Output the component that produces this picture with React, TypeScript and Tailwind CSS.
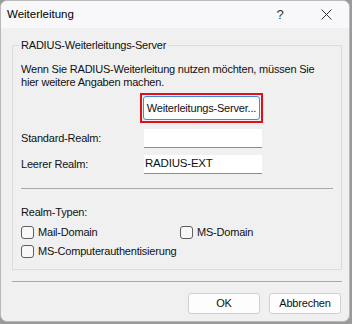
import React from "react";

function Checkbox({ label }: { label: string }) {
  return (
    <label className="flex items-center gap-[4px] whitespace-nowrap leading-[14px]">
      <span className="h-[13px] w-[13px] shrink-0 rounded-[3px] border border-[#5f5f5f] bg-[#f8f8f8]" />
      <span>{label}</span>
    </label>
  );
}

export default function App() {
  return (
    <div className="h-[324px] w-[352px] bg-[#9a9a9a] font-['Liberation_Sans',Arial,sans-serif] text-[11px] tracking-[-0.2px] text-[#111]">
      <div className="flex h-[322px] w-[350px] flex-col overflow-hidden rounded-[7px] border border-[#b9b9b9] bg-[#f0f0f0]">
        {/* title bar */}
        <div className="flex h-[27px] items-center bg-[#f8f8fb] pl-[6px]">
          <span className="flex-1 text-[11.5px] tracking-normal text-black">Weiterleitung</span>
          <span className="w-[46px] text-center text-[13px] text-[#333]">?</span>
          <span className="flex w-[46px] items-center justify-center">
            <svg width="11" height="11" viewBox="0 0 11 11">
              <path d="M0.5 0.5 L10.5 10.5 M10.5 0.5 L0.5 10.5" stroke="#333" strokeWidth="1" />
            </svg>
          </span>
        </div>

        <div className="flex flex-1 flex-col pl-[11px] pr-[7px] pt-[17px]">
          {/* group box */}
          <div className="relative h-[225px] whitespace-nowrap border border-[#dcdcdc] px-[8px] pt-[17px]">
            <span className="absolute left-[6px] top-[-9px] bg-[#f0f0f0] px-[2px] leading-[16px]">
              RADIUS-Weiterleitungs-Server
            </span>
            <p className="leading-[13px]">
              Wenn Sie RADIUS-Weiterleitung nutzen möchten, müssen Sie
              <br />
              hier weitere Angaben machen.
            </p>
            <div className="mt-[4px] flex pl-[119px]">
              <div className="border-[2px] border-[#e0101a] p-[1px]">
                <button className="flex h-[24px] w-[117px] items-center justify-center rounded-[3px] border border-[#3b8ee0] bg-[#fdfdfd] text-[11px] text-[#111]">
                  Weiterleitungs-Server...
                </button>
              </div>
            </div>
            <div className="mt-[6px] flex items-center">
              <span className="w-[123px]">Standard-Realm:</span>
              <div className="h-[19px] w-[118px] border-b border-[#8d8d8d] bg-white" />
            </div>
            <div className="mt-[7px] flex items-center">
              <span className="w-[123px]">Leerer Realm:</span>
              <div className="flex h-[19px] w-[118px] items-center border-b border-[#8d8d8d] bg-white pl-[1px] text-[11.5px]">
                RADIUS-EXT
              </div>
            </div>
            <div className="mt-[14px] h-px bg-[#a8a8a8]" />
            <div className="mt-[16px] leading-[14px]">Realm-Typen:</div>
            <div className="mt-[6px] grid grid-cols-[159px_1fr] gap-y-[5px]">
              <Checkbox label="Mail-Domain" />
              <Checkbox label="MS-Domain" />
              <Checkbox label="MS-Computerauthentisierung" />
            </div>
          </div>

          <div className="mt-[11px] h-px bg-[#a8a8a8]" />

          <div className="mt-[11px] flex justify-end gap-[9px] pr-[1px]">
            <button className="h-[21px] w-[72px] rounded-[3px] border border-[#d0d0d0] bg-[#fdfdfd] text-[11px]">
              OK
            </button>
            <button className="h-[21px] w-[72px] rounded-[3px] border border-[#d0d0d0] bg-[#fdfdfd] text-[11px]">
              Abbrechen
            </button>
          </div>
        </div>
      </div>
    </div>
  );
}
